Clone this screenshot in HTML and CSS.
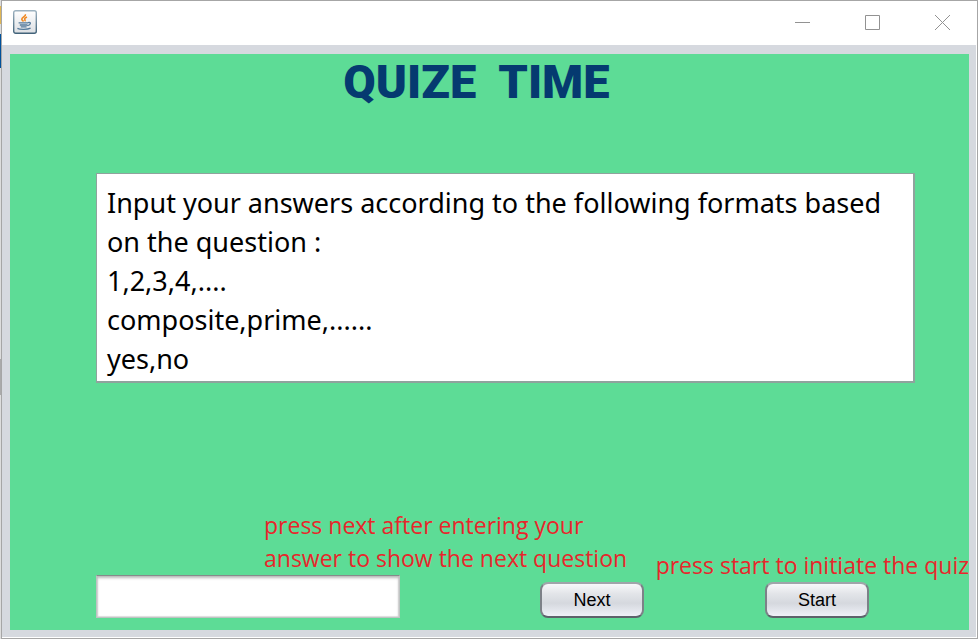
FILE: index.html
```html
<!DOCTYPE html>
<html lang="en">
<head>
<meta charset="utf-8">
<title>Quize Time</title>
<link rel="stylesheet" href="styles.css">
</head>
<body>
<div class="window">
  <header class="titlebar">
    <svg class="app-icon" width="24" height="24" viewBox="0 0 24 24" aria-hidden="true">
      <defs>
        <linearGradient id="tile" x1="0" y1="0" x2="0" y2="1"><stop offset="0" stop-color="#fff"/><stop offset="1" stop-color="#dcdfe3"/></linearGradient>
        <linearGradient id="edge" x1="0" y1="0" x2="0" y2="1"><stop offset="0" stop-color="#9db2c0"/><stop offset="1" stop-color="#42637a"/></linearGradient>
      </defs>
      <rect x=".7" y=".7" width="22.6" height="22.6" rx="2" fill="url(#tile)" stroke="url(#edge)" stroke-width="1.4"/>
      <path d="M12.400 4.200c.8 2-3.600 3-3.600 5 0 1.100 1.200 1.400 1.700 2.300M14 7c-1.500.6-2.600 1.200-2.300 2.300.2.800.8 1 .1 1.900" fill="none" stroke="#f08a24" stroke-width="1.600"/>
      <path d="M5.600 12.900h9.400M6.800 15h7.600M7.800 16.900h5.800M15 12.700c3.400-1 3.200 2.200-.6 2.900M4.400 18.400c2.500 1.300 10 1.300 13.200-.2" fill="none" stroke="#557a9b" stroke-width="1.300"/>
    </svg>
    <div class="window-buttons">
      <button type="button" aria-label="Minimize"><svg width="15" height="15" viewBox="0 0 15 15"><path d="M0 7.500h15"/></svg></button>
      <button type="button" aria-label="Maximize"><svg width="15" height="15" viewBox="0 0 15 15"><path d="M.5.500h14v14h-14z"/></svg></button>
      <button type="button" aria-label="Close"><svg width="15" height="15" viewBox="0 0 15 15"><path d="M0 0l15 15M15 0L0 15"/></svg></button>
    </div>
  </header>
  <main class="quiz">
    <h1 class="title">QUIZE&nbsp; TIME</h1>
    <textarea class="question" rows="5" readonly aria-label="Question">Input your answers according to the following formats based on the question :
1,2,3,4,....
composite,prime,......
yes,no</textarea>
    <div class="controls">
      <form class="answer">
        <label class="hint answer-hint" for="answer">press next after entering your<br>answer to show the next question</label>
        <div class="answer-row">
          <input class="answer-box" id="answer" type="text">
          <button class="push" type="button">Next</button>
        </div>
      </form>
      <div class="start">
        <p class="hint">press start to initiate the quiz</p>
        <button class="push" type="button">Start</button>
      </div>
    </div>
  </main>
</div>
</body>
</html>
```
FILE: styles.css
```css
* {
  box-sizing: border-box;
}

body {
  margin: 0;
  min-height: 100vh;
  display: flex;
  padding: 0 0 0 1px;
  background: linear-gradient(#ddd 6px, #dfb654 6px 24px, #ddd 24px 34px, #00509a 34px 68px, #ddd 68px 359px, #aaa 359px 395px, #ddd 395px);
}

.window {
  flex: 1;
  display: flex;
  flex-direction: column;
  border: 1px solid #a6a6a6;
  background: #fff;
}

.titlebar {
  display: flex;
  align-items: center;
  justify-content: space-between;
  height: 44px;
  padding: 0 0 2px 11px;
}

.app-icon {
  display: block;
}

.window-buttons {
  display: flex;
}

.window-buttons button {
  display: flex;
  align-items: center;
  justify-content: center;
  width: 70px;
  height: 41px;
  padding: 0;
  border: 0;
  background: none;
}

.window-buttons path {
  fill: none;
  stroke: #929292;
  stroke-width: 1;
}

.quiz {
  flex: 1;
  display: flex;
  flex-direction: column;
  margin: 0 1px 1px 0;
  border: solid #d6d9df;
  border-width: 9px 7px 7px 8px;
  background: #5ddc96;
}

.title {
  margin: 0 0 63px;
  padding-right: 26px;
  color: #053a70;
  font: 900 47px/56px Roboto, "Liberation Sans", sans-serif;
  text-align: center;
}

.question {
  display: block;
  margin: 0 54px 0 86px;
  padding: 9px 10px 3px;
  border: 1px solid #8fa39d;
  border-width: 1px 2px 2px 1px;
  background: #fff;
  color: #000;
  font: 27px/39px "Noto Sans", "Open Sans", sans-serif;
  resize: none;
  overflow: hidden;
  outline: 0;
}

.controls {
  display: flex;
  align-items: flex-end;
  justify-content: space-between;
  margin-top: auto;
  padding: 0 0 12px 86px;
}

.answer {
  flex: 0 0 548px;
}

.hint {
  display: block;
  margin: 0;
  color: #e8262c;
  font: 23px/33px "Open Sans", "Noto Sans", sans-serif;
  white-space: nowrap;
}

.answer-hint {
  margin-left: 168px;
}

.answer-row {
  display: flex;
  align-items: flex-end;
  justify-content: space-between;
}

.answer-box {
  width: 304px;
  height: 43px;
  padding: 0 8px;
  border: 1px solid #bfc3c3;
  border-top-color: #868b8b;
  background: #fff;
  box-shadow: inset 0 2px 3px #bbb, inset 0 0 1px 1px #ddd;
  font: 18px "Liberation Sans", sans-serif;
}

.start {
  display: flex;
  flex-direction: column;
  align-items: flex-end;
}

.start .push {
  margin-right: 100px;
}

.push {
  width: 104px;
  height: 36px;
  border: 2px solid #8d9197;
  border-color: #a0a4aa #7d8188 #5d626b;
  border-radius: 8px;
  background: linear-gradient(#f8f8fa, #e3e5e9 30%, #d5d8de 60%, #eff1f8);
  color: #000;
  font: 18px/24px "Liberation Sans", Arial, sans-serif;
}
```
